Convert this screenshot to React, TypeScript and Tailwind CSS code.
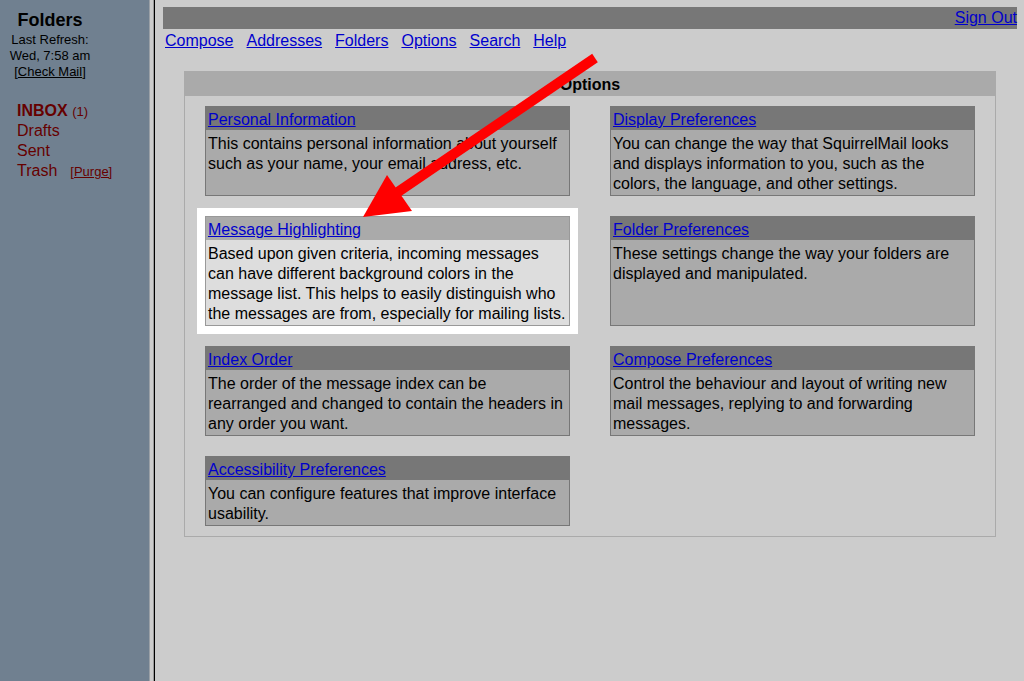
import React from "react";

type Opt = { title: string; desc: string; hl?: boolean };

const left: Opt[] = [
  { title: "Personal Information", desc: "This contains personal information about yourself such as your name, your email address, etc." },
  { title: "Message Highlighting", desc: "Based upon given criteria, incoming messages can have different background colors in the message list. This helps to easily distinguish who the messages are from, especially for mailing lists.", hl: true },
  { title: "Index Order", desc: "The order of the message index can be rearranged and changed to contain the headers in any order you want." },
  { title: "Accessibility Preferences", desc: "You can configure features that improve interface usability." },
];
const right: Opt[] = [
  { title: "Display Preferences", desc: "You can change the way that SquirrelMail looks and displays information to you, such as the colors, the language, and other settings." },
  { title: "Folder Preferences", desc: "These settings change the way your folders are displayed and manipulated." },
  { title: "Compose Preferences", desc: "Control the behaviour and layout of writing new mail messages, replying to and forwarding messages." },
];

function Card({ o }: { o: Opt }) {
  return (
    <div
      className={
        "flex flex-col border " +
        (o.hl ? "border-[#999] shadow-[0_0_0_8px_#ffffff]" : "border-[#777]")
      }
    >
      <div className={"px-[2px] pt-[3px] h-[23px] leading-[20px] " + (o.hl ? "bg-[#aaaaaa]" : "bg-[#777777]")}>
        <a href="#" className="text-[#0000cc] underline">{o.title}</a>
      </div>
      <div className={"flex-1 px-[2px] pt-[4px] pb-[1px] leading-[20px] text-black " + (o.hl ? "bg-[#dddddd]" : "bg-[#aaaaaa]")}>
        {o.desc}
      </div>
    </div>
  );
}

export default function App() {
  const rows = [0, 1, 2, 3];
  return (
    <div
      className="relative flex w-[1024px] h-[681px] overflow-hidden text-[16px]"
      style={{ fontFamily: '"Liberation Sans", Arial, sans-serif' }}
    >
      {/* Sidebar */}
      <div className="w-[149px] h-full bg-[#708090] shrink-0">
        <div className="w-[100px] text-center pt-[9px]">
          <div className="font-bold text-[18px] leading-[22px]">Folders</div>
          <div className="text-[13px] leading-[16px] mt-[1px]">Last Refresh:</div>
          <div className="text-[13px] leading-[16px]">Wed, 7:58 am</div>
          <div className="text-[13px] leading-[16px]">
            [<a href="#" className="underline text-black">Check Mail</a>]
          </div>
        </div>
        <div className="pl-[17px] mt-[21px] text-[#660000]">
          <div className="h-[20px] leading-[20px]">
            <span className="font-bold">INBOX</span>{" "}
            <span className="text-[13px]">(1)</span>
          </div>
          <div className="h-[20px] leading-[20px]">Drafts</div>
          <div className="h-[20px] leading-[20px]">Sent</div>
          <div className="h-[20px] leading-[20px]">
            <span>Trash</span>
            <a href="#" className="ml-[13px] text-[13px] underline text-[#660000]">[Purge]</a>
          </div>
        </div>
      </div>
      {/* Divider */}
      <div className="w-px h-full bg-[#9aa0a6] shrink-0" />
      <div className="w-[3px] h-full bg-[#cccccc] shrink-0" />
      <div className="w-px h-full bg-[#999999] shrink-0" />
      <div className="w-px h-full bg-black shrink-0" />
      {/* Main */}
      <div className="flex-1 h-full bg-[#cccccc] pt-[7px] pl-[8px] pr-[7px]">
        <div className="h-[22px] bg-[#777777] flex justify-end items-center leading-[24px]">
          <a href="#" className="text-[#0000cc] underline">Sign Out</a>
        </div>
        <div className="flex gap-[13px] pl-[2px] leading-[20px] mt-[2px]">
          {["Compose", "Addresses", "Folders", "Options", "Search", "Help"].map((n) => (
            <a key={n} href="#" className="text-[#0000cc] underline">{n}</a>
          ))}
        </div>
        <div className="mx-[21px] mt-[20px] border border-[#aaaaaa]">
          <div className="bg-[#aaaaaa] h-[24px] leading-[26px] text-center font-bold text-black">Options</div>
          <div className="px-[20px] pt-[10px] pb-[10px] grid grid-cols-[365px_365px] gap-x-[40px] gap-y-[20px]">
            {rows.map((i) => (
              <React.Fragment key={i}>
                {left[i] ? <Card o={left[i]} /> : <div />}
                {right[i] ? <Card o={right[i]} /> : <div />}
              </React.Fragment>
            ))}
          </div>
        </div>
      </div>
      {/* Arrow annotation */}
      <svg className="absolute left-0 top-0 pointer-events-none" width="1024" height="681">
        <line x1="595" y1="58" x2="395" y2="194" stroke="#ff0000" strokeWidth="10" />
        <polygon points="363,217 387,175 412,211" fill="#ff0000" />
      </svg>
    </div>
  );
}
